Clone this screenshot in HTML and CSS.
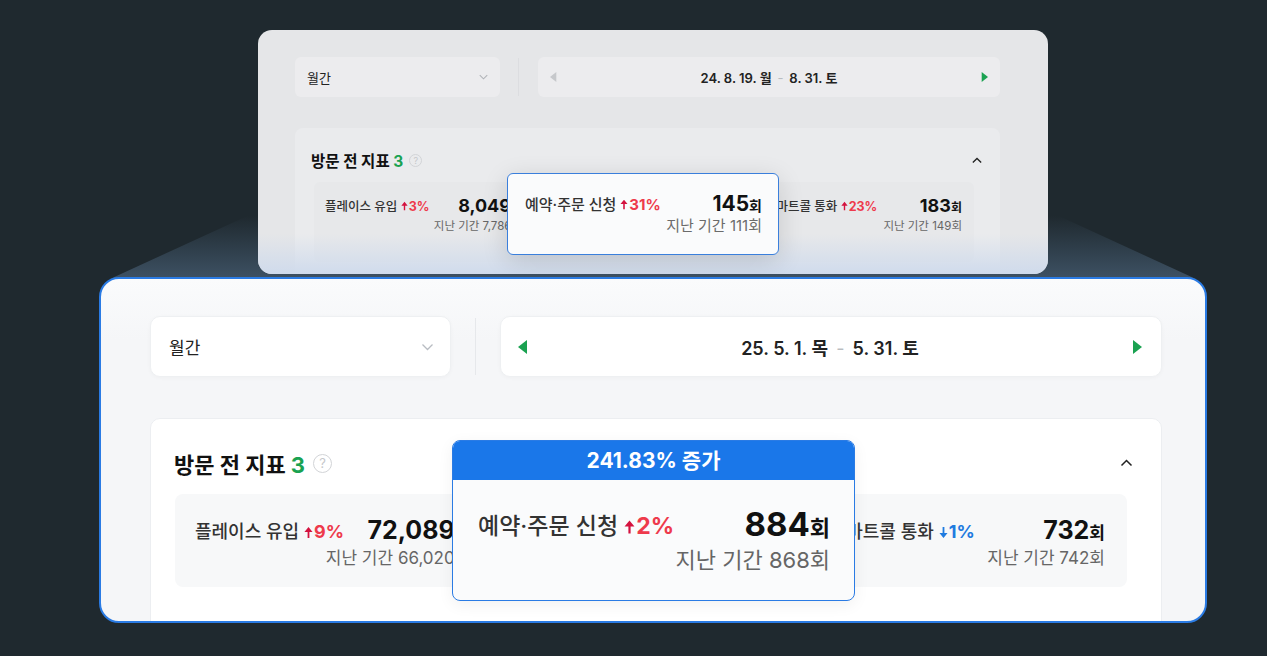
FILE: index.html
```html
<!DOCTYPE html>
<html lang="ko">
<head>
    <meta charset="UTF-8">
    <meta name="viewport" content="width=device-width, initial-scale=1.0">
    <title>방문 전 지표 비교</title>
    <link rel="stylesheet" href="styles.css">
</head>
<body>
    <div class="stage">
        <div class="beam"></div>

        <!-- Previous period (dimmed card) -->
        <section class="card card-prev">
            <div class="toolbar">
                <div class="select">
                    <span>월간</span>
                    <svg class="chev-down" viewBox="0 0 12 8"><path d="M1 1.5l5 5 5-5" fill="none" stroke="currentColor" stroke-width="1.4"/></svg>
                </div>
                <div class="divider"></div>
                <div class="date-nav">
                    <svg class="tri tri-off" viewBox="0 0 10 14"><path d="M9 0v14L0 7z"/></svg>
                    <span class="date">24. 8. 19. 월 <span class="dash">-</span> 8. 31. 토</span>
                    <svg class="tri" viewBox="0 0 10 14"><path d="M1 0v14l9-7z"/></svg>
                </div>
            </div>

            <div class="panel">
                <div class="panel-head">
                    <h2>방문 전 지표 <em>3</em></h2>
                    <span class="help">?</span>
                    <svg class="chev-up" viewBox="0 0 12 8"><path d="M1 6.5l5-5 5 5" fill="none" stroke="currentColor" stroke-width="1.6"/></svg>
                </div>
                <div class="metrics">
                    <div class="metric">
                        <div class="metric-row">
                            <span class="metric-name">플레이스 유입 <span class="rate up"><svg viewBox="0 0 10 14"><path d="M5 1L9.5 6.5H6V13H4V6.5H0.5z"/></svg>3%</span></span>
                            <span class="metric-value">8,049<small>회</small></span>
                        </div>
                        <div class="metric-prev">지난 기간 7,786회</div>
                    </div>
                    <div class="metric metric-covered">
                        <div class="metric-row">
                            <span class="metric-name">예약·주문 신청 <span class="rate up"><svg viewBox="0 0 10 14"><path d="M5 1L9.5 6.5H6V13H4V6.5H0.5z"/></svg>31%</span></span>
                            <span class="metric-value">145<small>회</small></span>
                        </div>
                        <div class="metric-prev">지난 기간 111회</div>
                    </div>
                    <div class="metric">
                        <div class="metric-row">
                            <span class="metric-name">스마트콜 통화 <span class="rate up"><svg viewBox="0 0 10 14"><path d="M5 1L9.5 6.5H6V13H4V6.5H0.5z"/></svg>23%</span></span>
                            <span class="metric-value">183<small>회</small></span>
                        </div>
                        <div class="metric-prev">지난 기간 149회</div>
                    </div>
                </div>
            </div>

            <div class="tip tip-prev">
                <div class="tip-body">
                    <div class="metric-row">
                        <span class="metric-name">예약·주문 신청 <span class="rate up"><svg viewBox="0 0 10 14"><path d="M5 1L9.5 6.5H6V13H4V6.5H0.5z"/></svg>31%</span></span>
                        <span class="metric-value">145<small>회</small></span>
                    </div>
                    <div class="metric-prev">지난 기간 111회</div>
                </div>
            </div>
        </section>

        <!-- Current period -->
        <section class="card card-now">
            <div class="toolbar">
                <div class="select">
                    <span>월간</span>
                    <svg class="chev-down" viewBox="0 0 12 8"><path d="M1 1.5l5 5 5-5" fill="none" stroke="currentColor" stroke-width="1.3"/></svg>
                </div>
                <div class="divider"></div>
                <div class="date-nav">
                    <svg class="tri" viewBox="0 0 10 14"><path d="M9 0v14L0 7z"/></svg>
                    <span class="date">25. 5. 1. 목 <span class="dash">-</span> 5. 31. 토</span>
                    <svg class="tri" viewBox="0 0 10 14"><path d="M1 0v14l9-7z"/></svg>
                </div>
            </div>

            <div class="panel">
                <div class="panel-head">
                    <h2>방문 전 지표 <em>3</em></h2>
                    <span class="help">?</span>
                    <svg class="chev-up" viewBox="0 0 12 8"><path d="M1 6.5l5-5 5 5" fill="none" stroke="currentColor" stroke-width="1.5"/></svg>
                </div>
                <div class="metrics">
                    <div class="metric">
                        <div class="metric-row">
                            <span class="metric-name">플레이스 유입 <span class="rate up"><svg viewBox="0 0 10 14"><path d="M5 1L9.5 6.5H6V13H4V6.5H0.5z"/></svg>9%</span></span>
                            <span class="metric-value">72,089<small>회</small></span>
                        </div>
                        <div class="metric-prev">지난 기간 66,020회</div>
                    </div>
                    <div class="metric metric-covered">
                        <div class="metric-row">
                            <span class="metric-name">예약·주문 신청 <span class="rate up"><svg viewBox="0 0 10 14"><path d="M5 1L9.5 6.5H6V13H4V6.5H0.5z"/></svg>2%</span></span>
                            <span class="metric-value">884<small>회</small></span>
                        </div>
                        <div class="metric-prev">지난 기간 868회</div>
                    </div>
                    <div class="metric">
                        <div class="metric-row">
                            <span class="metric-name">스마트콜 통화 <span class="rate down"><svg viewBox="0 0 10 14"><path d="M5 13L9.5 7.5H6V1H4V7.5H0.5z"/></svg>1%</span></span>
                            <span class="metric-value">732<small>회</small></span>
                        </div>
                        <div class="metric-prev">지난 기간 742회</div>
                    </div>
                </div>
            </div>

            <div class="tip tip-now">
                <div class="tip-head">241.83% 증가</div>
                <div class="tip-body">
                    <div class="metric-row">
                        <span class="metric-name">예약·주문 신청 <span class="rate up"><svg viewBox="0 0 10 14"><path d="M5 1L9.5 6.5H6V13H4V6.5H0.5z"/></svg>2%</span></span>
                        <span class="metric-value">884<small>회</small></span>
                    </div>
                    <div class="metric-prev">지난 기간 868회</div>
                </div>
            </div>
        </section>
    </div>
</body>
</html>
```

FILE: styles.css
```css
* {
    margin: 0;
    padding: 0;
    box-sizing: border-box;
}

body {
    background-color: #1f292f;
    font-family: Inter, "Noto Sans CJK KR", sans-serif;
    color: #222;
}

.stage {
    position: relative;
    width: 1267px;
    height: 656px;
    padding-top: 30px;
    overflow: hidden;
}

/* light beam between the two cards */
.beam {
    position: absolute;
    left: 0;
    top: 0;
    width: 1267px;
    height: 656px;
    background: linear-gradient(180deg, #1f292f 216px, #3d5163 278px);
    clip-path: polygon(258px 211px, 1048px 211px, 1196px 279px, 110px 279px);
}

/* Cards */
.card {
    position: relative;
    z-index: 1;
    overflow: hidden;
}

.card-prev {
    margin-left: 258px;
    width: 790px;
    height: 244px;
    padding: 27px 48px 0 37px;
    border-radius: 14px;
    background-color: #e5e6e8;
}

.card-prev::after {
    content: "";
    position: absolute;
    left: 0;
    right: 0;
    bottom: 0;
    height: 40px;
    background: linear-gradient(180deg, rgba(214, 224, 238, 0), rgba(206, 218, 236, 0.95));
    pointer-events: none;
    z-index: 1;
}

.card-now {
    margin-top: 3px;
    margin-left: 99px;
    width: 1108px;
    height: 346px;
    padding: 37px 43px 0 49px;
    border: 2px solid #2a7be4;
    border-radius: 20px;
    background: linear-gradient(180deg, #fafbfc, #f5f6f8 60px);
}

/* Toolbar */
.toolbar {
    display: flex;
    align-items: center;
}

.select,
.date-nav {
    display: flex;
    align-items: center;
    justify-content: space-between;
}

.chev-down,
.chev-up {
    display: block;
}

.tri {
    display: block;
    fill: #1aa251;
}

.tri-off {
    fill: #c6c8cb;
}

.dash {
    color: #b9bcc0;
    font-weight: 400;
    margin: 0 0.2em;
}

.card-prev .toolbar { height: 40px; gap: 18px; }
.card-prev .select {
    width: 205px;
    height: 40px;
    padding: 0 12px 0 12px;
    background-color: #ececee;
    border-radius: 6px;
    font-size: 13px;
}
.card-prev .chev-down { width: 9px; height: 6px; color: #b0b3b8; }
.card-prev .divider { width: 1px; height: 38px; background-color: #dcdde0; margin-right: 1px; }
.card-prev .date-nav {
    flex: 1;
    height: 40px;
    padding: 0 12px 0 12px;
    background-color: #ececee;
    border-radius: 6px;
}
.card-prev .tri { width: 7px; height: 10px; }
.card-prev .date { font-size: 13px; font-weight: 600; }

.card-now .toolbar { height: 61px; gap: 24px; }
.card-now .select {
    width: 301px;
    height: 61px;
    padding: 0 16px 0 18px;
    background-color: #fff;
    border: 1px solid #eef0f2;
    border-radius: 10px;
    box-shadow: 0 1px 4px rgba(0, 0, 0, 0.03);
    font-size: 17px;
}
.card-now .chev-down { width: 13px; height: 8px; color: #b8bcc2; }
.card-now .divider { width: 1px; height: 57px; background-color: #e6e8eb; }
.card-now .date-nav {
    flex: 1;
    height: 61px;
    padding: 0 19px 0 17px;
    background-color: #fff;
    border: 1px solid #eef0f2;
    border-radius: 10px;
    box-shadow: 0 1px 4px rgba(0, 0, 0, 0.03);
}
.card-now .tri { width: 10px; height: 14px; }
.card-now .date { font-size: 18px; font-weight: 600; }

/* Panel */
.panel-head {
    display: flex;
    align-items: center;
}

.panel-head h2 {
    font-weight: 700;
    color: #111;
}

.panel-head h2 em {
    font-style: normal;
    color: #1aa251;
}

.help {
    display: flex;
    align-items: center;
    justify-content: center;
    border-radius: 50%;
    border: 1px solid #d2d4d7;
    color: #c6c8cb;
}

.chev-up {
    margin-left: auto;
    color: #222;
}

.metrics {
    display: grid;
    grid-template-columns: 1fr 1fr 1fr;
}

/* the middle metric sits under the tooltip */
.metric-covered {
    visibility: hidden;
}

.metric-row {
    display: flex;
    align-items: center;
    justify-content: space-between;
}

.metric-name {
    font-weight: 500;
    color: #333;
    white-space: nowrap;
}

.rate {
    font-weight: 700;
}

.rate svg {
    display: inline-block;
    vertical-align: -0.05em;
    margin-right: 1px;
}

.rate.up { color: #ee3a4c; }
.rate.up svg { fill: #d4123f; }
.rate.down { color: #1f7be0; }
.rate.down svg { fill: #1f7be0; }

.metric-value {
    font-weight: 700;
    color: #111;
    white-space: nowrap;
}

.metric-prev {
    text-align: right;
    color: #666;
    white-space: nowrap;
}

.card-prev .panel {
    margin-top: 31px;
    height: 160px;
    padding: 22px 18px 0 16px;
    background-color: #eaebed;
    border-radius: 8px;
}
.card-prev .panel-head { height: 20px; }
.card-prev .panel-head h2 { font-size: 15.5px; }
.card-prev .help { width: 13px; height: 13px; margin-left: 6px; font-size: 9px; }
.card-prev .chev-up { width: 10px; height: 7px; }
.card-prev .metrics {
    margin: 12px 8px 0 3px;
    height: 80px;
    padding-top: 14px;
    background-color: #e7e8ea;
    border-radius: 6px;
}
.card-prev .metric { padding: 0 12px 0 11px; }
.card-prev .metric-row { height: 18px; }
.card-prev .metric-name { font-size: 12.5px; }
.card-prev .rate svg { width: 7px; height: 10px; }
.card-prev .metric-value { font-size: 18px; }
.card-prev .metric-value small { font-size: 12px; }
.card-prev .metric-prev { margin-top: 4px; font-size: 11.5px; line-height: 16px; }

.card-now .panel {
    margin-top: 41px;
    height: 240px;
    padding: 29px 28px 0 23px;
    background-color: #fff;
    border: 1px solid #eceef1;
    border-radius: 10px 10px 0 0;
}
.card-now .panel-head { height: 30px; }
.card-now .panel-head h2 { font-size: 22px; }
.card-now .help { width: 19px; height: 19px; margin-left: 8px; font-size: 13px; }
.card-now .chev-up { width: 13px; height: 8px; margin-right: 0; }
.card-now .metrics {
    margin: 16px 6px 0 1px;
    height: 93px;
    padding-top: 22px;
    background-color: #f7f8f9;
    border-radius: 8px;
}
.card-now .metric { padding: 0 22px 0 20px; }
.card-now .metric-row { height: 28px; }
.card-now .metric-name { font-size: 18px; }
.card-now .rate svg { width: 9px; height: 13px; }
.card-now .metric-value { font-size: 25px; }
.card-now .metric-value small { font-size: 17px; }
.card-now .metric-prev { margin-top: 3px; font-size: 17px; line-height: 22px; }

/* Tooltips laid over the middle metric */
.tip {
    position: absolute;
    z-index: 2;
    overflow: hidden;
    background-color: #fafbfc;
}

.tip-prev {
    left: 249px;
    top: 143px;
    width: 272px;
    height: 82px;
    border: 1px solid #3a7fdc;
    border-radius: 6px;
    box-shadow: 0 6px 26px rgba(0, 0, 0, 0.14);
}
.tip-prev .tip-body { padding: 17px 16px 0 17px; }
.tip-prev .metric-row { height: 24px; }
.tip-prev .metric-name { font-size: 15px; }
.tip-prev .rate svg { width: 8px; height: 11px; }
.tip-prev .metric-value { font-size: 21px; }
.tip-prev .metric-value small { font-size: 14px; }
.tip-prev .metric-prev { margin-top: 1px; font-size: 15px; line-height: 20px; color: #6b6b6b; }

.tip-now {
    left: 351px;
    top: 161px;
    width: 403px;
    height: 161px;
    border: 1.5px solid #2a7be4;
    border-radius: 8px;
    box-shadow: 0 4px 16px rgba(0, 0, 0, 0.06);
}
.tip-head {
    height: 39px;
    background-color: #1a77e9;
    color: #fff;
    font-size: 21px;
    font-weight: 700;
    line-height: 39px;
    text-align: center;
}
.tip-now .tip-body { padding: 26px 24px 0 25px; }
.tip-now .metric-row { height: 36px; }
.tip-now .metric-name { font-size: 23px; }
.tip-now .rate svg { width: 11px; height: 16px; }
.tip-now .metric-value { font-size: 33px; }
.tip-now .metric-value small { font-size: 22px; }
.tip-now .metric-prev { margin-top: 5px; font-size: 22px; line-height: 26px; color: #666; font-weight: 400; }
```
